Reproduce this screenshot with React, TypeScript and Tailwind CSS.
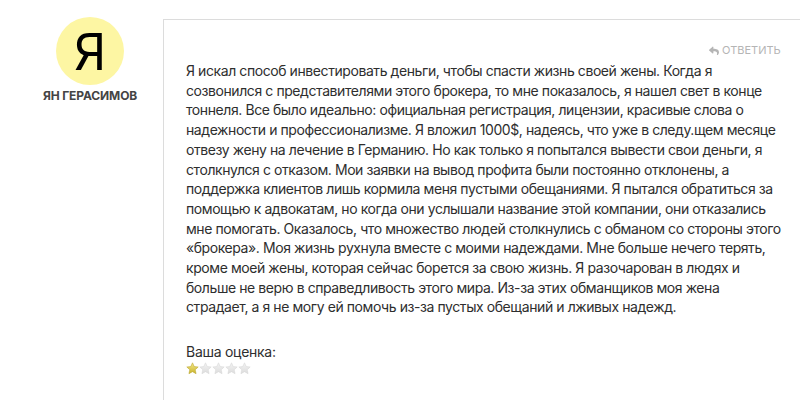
import { useState } from 'react'

const reviewLines = [
  'Я искал способ инвестировать деньги, чтобы спасти жизнь своей жены. Когда я',
  'созвонился с представителями этого брокера, то мне показалось, я нашел свет в конце',
  'тоннеля. Все было идеально: официальная регистрация, лицензии, красивые слова о',
  'надежности и профессионализме. Я вложил 1000$, надеясь, что уже в следу.щем месяце',
  'отвезу жену на лечение в Германию. Но как только я попытался вывести свои деньги, я',
  'столкнулся с отказом. Мои заявки на вывод профита были постоянно отклонены, а',
  'поддержка клиентов лишь кормила меня пустыми обещаниями. Я пытался обратиться за',
  'помощью к адвокатам, но когда они услышали название этой компании, они отказались',
  'мне помогать. Оказалось, что множество людей столкнулись с обманом со стороны этого',
  '«брокера». Моя жизнь рухнула вместе с моими надеждами. Мне больше нечего терять,',
  'кроме моей жены, которая сейчас борется за свою жизнь. Я разочарован в людях и',
  'больше не верю в справедливость этого мира. Из-за этих обманщиков моя жена',
  'страдает, а я не могу ей помочь из-за пустых обещаний и лживых надежд.',
]

const Star = ({ filled }: { filled: boolean }) => (
  <svg width="13" height="13" viewBox="0 0 24 24">
    <defs>
      <linearGradient id="starGold" x1="0" y1="0" x2="0" y2="1">
        <stop offset="0" stopColor="#f5e88a" />
        <stop offset="1" stopColor="#c9b42c" />
      </linearGradient>
      <linearGradient id="starGray" x1="0" y1="0" x2="0" y2="1">
        <stop offset="0" stopColor="#f4f4f4" />
        <stop offset="1" stopColor="#dcdcdc" />
      </linearGradient>
    </defs>
    <path
      d="M12 1.5l3.2 7 7.3.7-5.5 5 1.6 7.4L12 17.8l-6.6 3.8 1.6-7.4-5.5-5 7.3-.7z"
      fill={filled ? 'url(#starGold)' : 'url(#starGray)'}
      stroke={filled ? '#b8a32a' : '#d6d6d6'}
      strokeWidth="1"
    />
  </svg>
)

const ReplyIcon = () => (
  <svg width="10" height="9" viewBox="0 0 512 448" fill="#b5b5b5">
    <path d="M8 183L184 31c15-13 40-2 40 18v80c161 2 288 34 288 187 0 62-40 123-84 155-14 10-33-3-28-19 45-145-21-184-176-186v88c0 21-25 31-40 18L8 220c-11-10-11-27 0-37z" />
  </svg>
)

const App = () => {
  const [rating] = useState(1)

  return (
    <div
      className="min-h-screen bg-white flex items-start pt-[17px] pr-[21px] text-[#333]"
      style={{ fontFamily: 'Inter, "Liberation Sans", sans-serif' }}
    >
      <div className="w-[140px] ml-[20px] mr-[3px] flex flex-col items-center shrink-0">
        <div className="w-[68px] h-[68px] rounded-full bg-[#fdf6a3] flex items-center justify-center">
          <span className="text-[50px] leading-none text-black font-normal mt-[2px]">Я</span>
        </div>
        <div className="mt-[2px] text-[12px] font-bold text-[#444] uppercase tracking-[-0.01em]">
          Ян Герасимов
        </div>
      </div>

      <div className="flex-1 mt-[2px] border border-[#dcdcdc] px-[22px] pt-[23px] pb-[40px] min-h-[400px]">
        <div className="flex justify-end">
          <a href="#" className="flex items-center gap-[3px] text-[11px] leading-[14px] text-[#b5b5b5] uppercase">
            <ReplyIcon />
            Ответить
          </a>
        </div>
        <p className="mt-[4px] text-[14px] leading-[19.7px] tracking-[-0.03em] text-[#2e2e2e] whitespace-nowrap">
          {reviewLines.map((line, i) => (
            <span key={i} className="block">
              {line}
            </span>
          ))}
        </p>

        <div className="mt-[26px] text-[14px] leading-[18px] text-[#2e2e2e] tracking-[-0.02em]">Ваша оценка:</div>
        <div className="flex mt-[1px]">
          {[1, 2, 3, 4, 5].map((i) => (
            <Star key={i} filled={i <= rating} />
          ))}
        </div>
      </div>
    </div>
  )
}

export default App
